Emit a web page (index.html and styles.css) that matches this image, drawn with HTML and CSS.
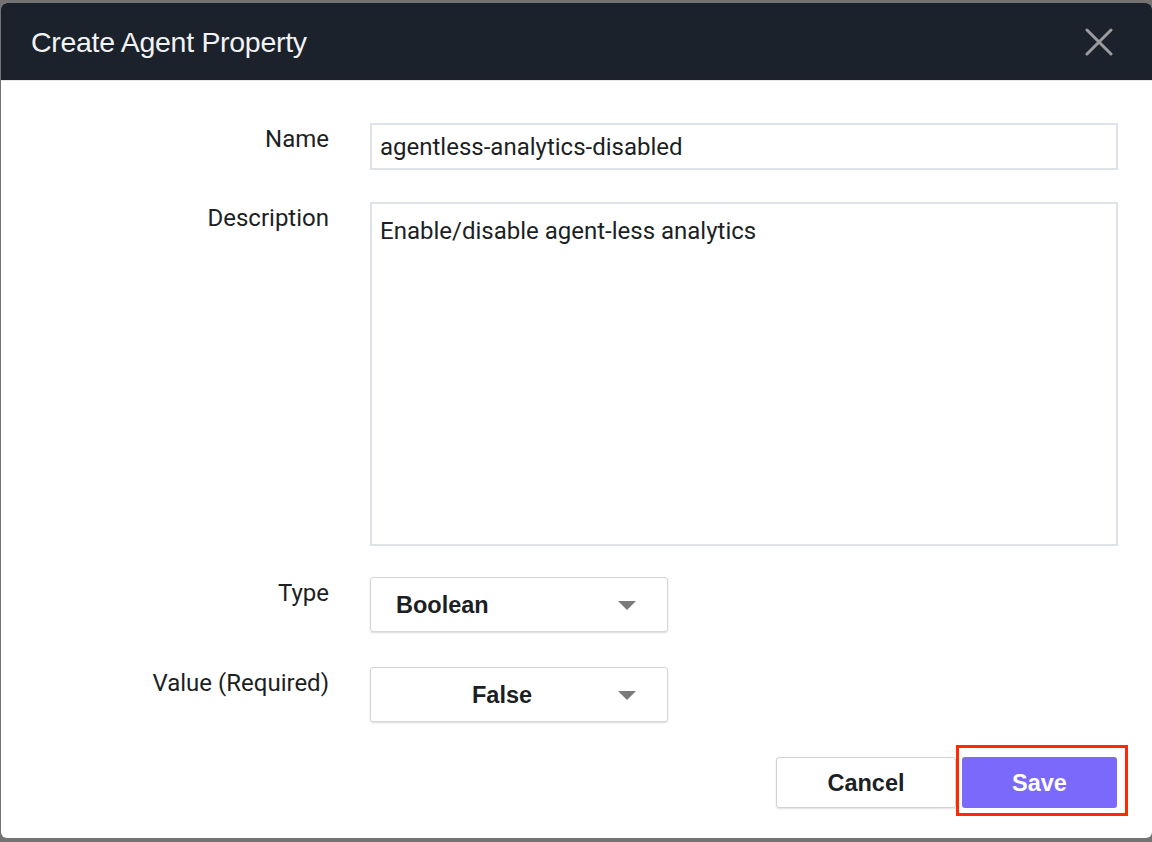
FILE: index.html
```html
<!DOCTYPE html>
<html>
<head>
<meta charset="utf-8">
<link rel="stylesheet" href="styles.css">
</head>
<body>
<div class="modal">
  <div class="modal-header">
    <h1 class="title">Create Agent Property</h1>
    <button class="close" aria-label="Close">
      <svg width="28" height="28" viewBox="0 0 28 28"><path d="M2 2 L26 26 M26 2 L2 26" stroke="#9b9c9e" stroke-width="3" stroke-linecap="round"/></svg>
    </button>
  </div>
  <div class="modal-body">
    <div class="row">
      <label class="label">Name</label>
      <div class="field input">agentless-analytics-disabled</div>
    </div>
    <div class="row row-desc">
      <label class="label">Description</label>
      <div class="field textarea">Enable/disable agent-less analytics</div>
    </div>
    <div class="row row-type">
      <label class="label">Type</label>
      <div class="select"><span class="select-text">Boolean</span><span class="caret"></span></div>
    </div>
    <div class="row row-value">
      <label class="label">Value (Required)</label>
      <div class="select centered"><span class="select-text">False</span><span class="caret"></span></div>
    </div>
    <div class="actions">
      <button class="btn btn-cancel">Cancel</button>
      <div class="highlight"><button class="btn btn-save">Save</button></div>
    </div>
  </div>
</div>
</body>
</html>
```
FILE: styles.css
```css
html, body {
  margin: 0;
  padding: 0;
}
body {
  background: #737373;
  width: 1152px;
  height: 842px;
  overflow: hidden;
  padding-top: 3px;
  padding-left: 1px;
  box-sizing: border-box;
}
.modal {
  width: 1151px;
  height: 835px;
  background: #ffffff;
  border-radius: 6px;
  overflow: hidden;
}
.modal-header {
  height: 77px;
  background: #1b222c;
  border-bottom: 1px solid #e4e6e9;
  display: flex;
  align-items: center;
  justify-content: space-between;
  padding: 0 39px 0 30px;
}
.title {
  margin: 0;
  padding-top: 2px;
  font-family: "Liberation Sans", Arial, sans-serif;
  font-weight: normal;
  font-size: 28.5px;
  letter-spacing: -0.3px;
  color: #f2f3f4;
}
.close {
  background: none;
  border: 0;
  padding: 0;
  margin: 0;
  width: 28px;
  height: 28px;
  display: block;
}
.close svg { display: block; }
.modal-body {
  padding: 42px 34px 0 0;
  font-family: Roboto, "Liberation Sans", sans-serif;
  color: #1c1f24;
}
.row {
  display: grid;
  grid-template-columns: 328px 748px;
  column-gap: 41px;
  margin-bottom: 32px;
}
.label {
  text-align: right;
  font-size: 24px;
  line-height: 28px;
  padding-top: 2px;
}
.field {
  border: 2px solid #dfe2e6;
  box-sizing: border-box;
  font-size: 24px;
  line-height: 28px;
  padding: 0 8px;
}
.input {
  height: 47px;
  padding-top: 8px;
}
.textarea {
  height: 344px;
  padding-top: 13px;
}
.row-desc { margin-bottom: 31px; }
.row-type { margin-bottom: 35px; }
.row-value { margin-bottom: 23px; }
.row-type, .row-value { grid-template-columns: 328px 298px; }
.select {
  height: 55px;
  box-sizing: border-box;
  border: 1px solid #d3d6da;
  border-radius: 3px;
  box-shadow: 0 1px 2px rgba(0,0,0,0.15);
  display: flex;
  align-items: center;
  padding: 1px 31px 0 25px;
  font-family: "Liberation Sans", Arial, sans-serif;
  font-weight: bold;
  font-size: 23.5px;
  color: #1c1f24;
}
.select-text { flex: 1; }
.centered .select-text { text-align: center; padding-right: 10px; }
.caret {
  width: 0;
  height: 0;
  border-left: 9px solid transparent;
  border-right: 9px solid transparent;
  border-top: 9px solid #7a7a7a;
}
.actions {
  display: flex;
  justify-content: flex-end;
  align-items: flex-start;
}
.btn {
  font-family: "Liberation Sans", Arial, sans-serif;
  font-weight: bold;
  font-size: 23.5px;
  height: 51px;
  border-radius: 3px;
  box-sizing: border-box;
  cursor: pointer;
  padding: 2px 0 0;
}
.btn-cancel {
  width: 180px;
  background: #ffffff;
  color: #1c1f24;
  border: 1px solid #cfd3d8;
  box-shadow: 0 1px 2px rgba(0,0,0,0.12);
  margin-top: 12px;
}
.highlight {
  border: 3px solid #ff2a00;
  padding: 9px 8px 5px 3px;
  margin-right: -10px;
  display: flex;
}
.btn-save {
  width: 155px;
  background: #7b69fb;
  color: #ffffff;
  border: 0;
}
```
